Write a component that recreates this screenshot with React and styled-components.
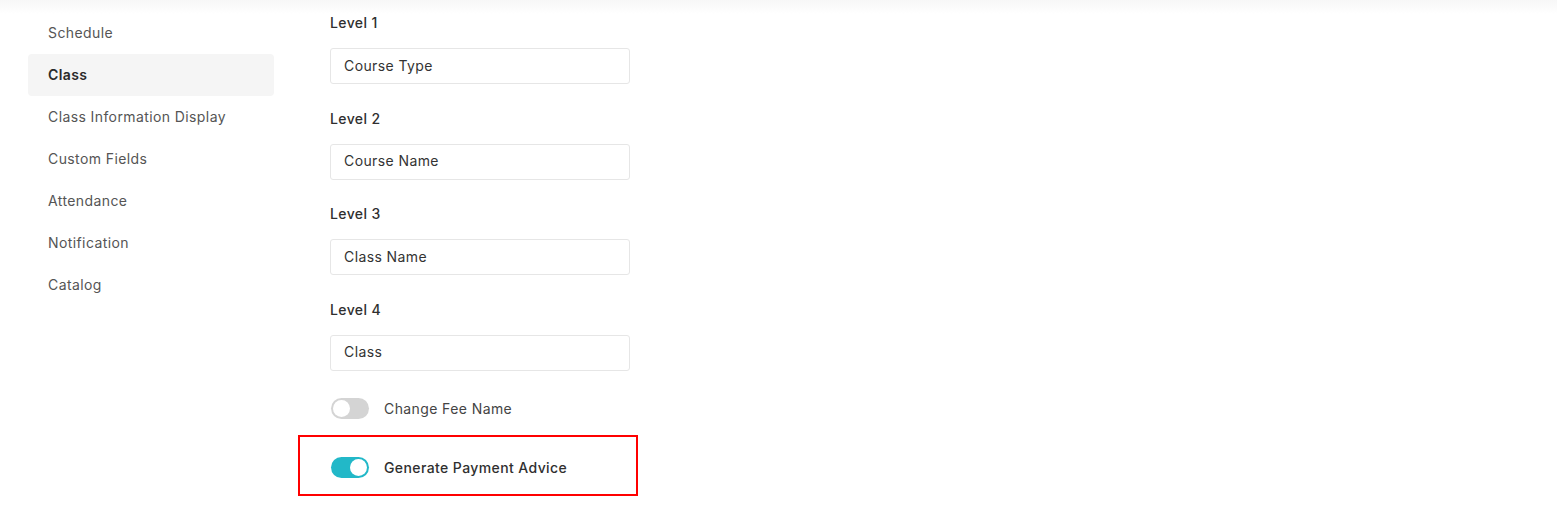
import React from 'react';
import styled, { createGlobalStyle } from 'styled-components';

const GlobalStyle = createGlobalStyle`
  html, body {
    margin: 0;
    padding: 0;
    background: #ffffff;
    font-family: Inter, "Noto Sans", sans-serif;
    color: #333333;
  }
`;

const Page = styled.div`
  position: relative;
  width: 1557px;
  height: 529px;
  overflow: hidden;
  background: #ffffff;
  display: flex;
  letter-spacing: 0.4px;

  &::before {
    content: '';
    position: absolute;
    left: 0;
    right: 0;
    top: 0;
    height: 14px;
    background: linear-gradient(to bottom, #f7f7f7, rgba(255, 255, 255, 0));
  }
`;

const Sidebar = styled.nav`
  width: 246px;
  margin-left: 28px;
  padding-top: 12px;
  display: flex;
  flex-direction: column;
`;

const NavItem = styled.div`
  height: 42px;
  display: flex;
  align-items: center;
  padding-left: 20px;
  padding-bottom: 1px;
  box-sizing: border-box;
  border-radius: 4px;
  font-size: 14px;
  color: ${props => (props.active ? '#2a2a2a' : '#555555')};
  font-weight: ${props => (props.active ? 600 : 400)};
  background: ${props => (props.active ? '#f5f5f5' : 'transparent')};
`;

const Main = styled.div`
  margin-left: 56px;
  padding-top: 14px;
  display: flex;
  flex-direction: column;
  width: 300px;
`;

const Field = styled.div`
  display: flex;
  flex-direction: column;
  margin-bottom: 25.5px;
`;

const Label = styled.div`
  font-size: 14px;
  font-weight: 500;
  color: #2f2f2f;
  line-height: 18px;
  margin-bottom: 16px;
`;

const Input = styled.div`
  box-sizing: border-box;
  height: 36px;
  width: 300px;
  border: 1px solid #e6e6e6;
  border-radius: 3px;
  display: flex;
  align-items: center;
  padding-left: 13px;
  padding-bottom: 2px;
  font-size: 14px;
  color: #333333;
`;

const ToggleRow = styled.div`
  display: flex;
  align-items: center;
  gap: 15px;
  padding-left: 1px;
  margin-top: ${props => (props.strong ? 0 : 2)}px;
  font-size: 14px;
  color: ${props => (props.strong ? '#2f2f2f' : '#444444')};
  font-weight: ${props => (props.strong ? 500 : 400)};
`;

const Highlight = styled.div`
  position: relative;
  margin-top: 16px;
  margin-left: -32px;
  width: 340px;
  height: 61px;
  box-sizing: border-box;
  border: 2px solid #ff0000;
  padding-left: 30px;
  padding-top: 4px;
  display: flex;
  align-items: center;
`;

const Track = styled.span`
  position: relative;
  width: 38px;
  height: 21px;
  border-radius: 11px;
  background: ${props => (props.on ? '#22b8c8' : '#d4d4d4')};
  flex-shrink: 0;

  &::after {
    content: '';
    position: absolute;
    top: 2px;
    left: ${props => (props.on ? '19px' : '2px')};
    width: 17px;
    height: 17px;
    border-radius: 50%;
    background: #ffffff;
  }
`;

const navItems = [
  'Schedule',
  'Class',
  'Class Information Display',
  'Custom Fields',
  'Attendance',
  'Notification',
  'Catalog',
];

const levels = [
  ['Level 1', 'Course Type'],
  ['Level 2', 'Course Name'],
  ['Level 3', 'Class Name'],
  ['Level 4', 'Class'],
];

const App = () => (
  <Page>
    <GlobalStyle />
    <Sidebar>
      {navItems.map(item => (
        <NavItem key={item} active={item === 'Class'}>
          {item}
        </NavItem>
      ))}
    </Sidebar>
    <Main>
      {levels.map(([label, value]) => (
        <Field key={label}>
          <Label>{label}</Label>
          <Input>{value}</Input>
        </Field>
      ))}
      <ToggleRow>
        <Track />
        Change Fee Name
      </ToggleRow>
      <Highlight>
        <ToggleRow strong>
          <Track on />
          Generate Payment Advice
        </ToggleRow>
      </Highlight>
    </Main>
  </Page>
);

export default App;
